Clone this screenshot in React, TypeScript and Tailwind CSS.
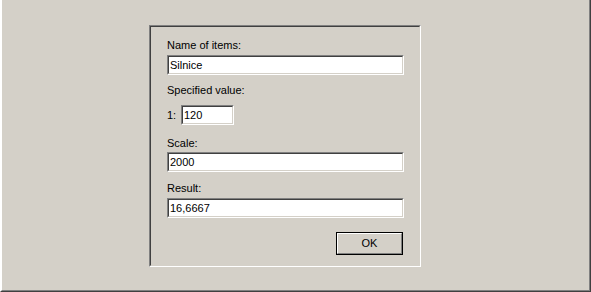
import React from "react";

const font = { fontFamily: '"Liberation Sans", Arial, sans-serif' };

function Field({ value, w }: { value: string; w: string }) {
  return (
    <div className={`${w} h-[20px] border-t border-l border-t-[#808080] border-l-[#808080] border-b border-r border-b-white border-r-white`}>
      <div className="h-full border-t border-l border-t-[#404040] border-l-[#404040] border-b border-r border-b-[#d4d0c8] border-r-[#d4d0c8] bg-white flex items-center pl-[1px] text-[11px] leading-[13px] text-black">
        {value}
      </div>
    </div>
  );
}

export default function App() {
  return (
    <div style={font} className="w-[591px] h-[292px] bg-[#d4d0c8] border-l border-l-white border-r border-r-[#404040] border-b border-b-[#404040]">
      <div className="h-full border-l border-l-white border-r border-r-[#808080] border-b border-b-[#808080] pl-[147px] pt-[25px]">
        <div className="w-[272px] h-[242px] border-t border-l border-t-[#808080] border-l-[#808080] border-b border-r border-b-white border-r-white">
          <div className="h-full border-t border-l border-t-[#404040] border-l-[#404040] border-b border-r border-b-[#d4d0c8] border-r-[#d4d0c8] pl-[16px] flex flex-col text-[11px] leading-[13px] text-black">
            <div className="mt-[12px] h-[13px]">Name of items:</div>
            <div className="mt-[3px]"><Field value="Silnice" w="w-[237px]" /></div>
            <div className="mt-[9px] h-[13px]">Specified value:</div>
            <div className="mt-[8px] flex items-center">
              <span className="w-[14px]">1:</span>
              <Field value="120" w="w-[53px]" />
            </div>
            <div className="mt-[12px] h-[13px]">Scale:</div>
            <div className="mt-[2px]"><Field value="2000" w="w-[237px]" /></div>
            <div className="mt-[10px] h-[13px]">Result:</div>
            <div className="mt-[3px]"><Field value="16,6667" w="w-[237px]" /></div>
            <div className="mt-[14px] ml-[169px] w-[67px] h-[23px] border border-black">
              <div className="h-full border-t border-l border-t-white border-l-white border-b border-r border-b-[#808080] border-r-[#808080] flex items-center justify-center text-[11px]">
                OK
              </div>
            </div>
          </div>
        </div>
      </div>
    </div>
  );
}
